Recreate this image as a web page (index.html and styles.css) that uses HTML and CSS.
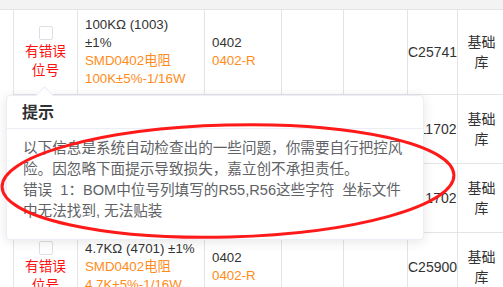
FILE: index.html
```html
<!DOCTYPE html>
<html lang="zh-CN">
<head>
<meta charset="utf-8">
<title>BOM 检查</title>
<link rel="stylesheet" href="styles.css">
</head>
<body>
<div class="page">
  <div class="strip"></div>

  <table class="bom">
    <colgroup>
      <col class="c-chk"><col class="c-desc"><col class="c-pkg"><col class="c-x"><col class="c-y"><col class="c-part"><col class="c-lib">
    </colgroup>
    <tbody>
      <tr>
        <td class="chk"><span class="box"></span><div class="err">有错误位号</div></td>
        <td><div>100KΩ (1003) ±1%</div><div class="org">SMD0402电阻</div><div class="org">100K±5%-1/16W</div></td>
        <td><div>0402</div><div class="org">0402-R</div></td>
        <td></td><td></td>
        <td class="mid">C25741</td>
        <td class="mid lib">基础库</td>
      </tr>
      <!-- rows 2/3 sit under the popover -->
      <tr class="r-mid">
        <td class="chk"><span class="box"></span></td>
        <td></td><td></td><td></td><td></td>
        <td class="mid">C11702</td>
        <td class="mid lib">基础库</td>
      </tr>
      <tr class="r-mid">
        <td class="chk"><span class="box"></span></td>
        <td></td><td></td><td></td><td></td>
        <td class="mid">C11702</td>
        <td class="mid lib">基础库</td>
      </tr>
      <tr>
        <td class="chk"><span class="box"></span><div class="err">有错误位号</div></td>
        <td><div>4.7KΩ (4701) ±1%</div><div class="org">SMD0402电阻</div><div class="org">4.7K±5%-1/16W</div></td>
        <td><div>0402</div><div class="org">0402-R</div></td>
        <td></td><td></td>
        <td class="mid">C25900</td>
        <td class="mid lib">基础库</td>
      </tr>
    </tbody>
  </table>

  <!-- popover anchored to row 1 -->
  <div class="pop" role="tooltip">
    <div class="pop-title">提示</div>
    <div class="pop-body">以下信息是系统自动检查出的一些问题，你需要自行把控风险。因忽略下面提示导致损失，嘉立创不承担责任。<br>错误&nbsp;&nbsp;1：BOM中位号列填写的R55,R56这些字符&nbsp;&nbsp;坐标文件中无法找到, 无法贴装</div>
  </div>

  <!-- hand-drawn red circle -->
  <svg class="mark" width="503" height="287" viewBox="0 0 503 287">
    <ellipse cx="228" cy="181" rx="226" ry="56" transform="rotate(-1.5 228 181)"/>
  </svg>
</div>
</body>
</html>
```

FILE: styles.css
```css
:root{
  --line:#e4e4e4;--text:#333;--orange:#ff8c1a;--red:#ff1111;
  --pop-line:#ebeef5;--pop-text:#606266;--pop-title:#303133
}
*{box-sizing:border-box;margin:0;padding:0}
html,body{width:503px;height:287px;overflow:hidden;background:#fff}
body{font-family:"Liberation Sans","Noto Sans CJK SC",sans-serif;font-size:13.3px;color:var(--text)}
.page{position:relative;width:503px;height:287px}

.strip{height:10px;background:#f3f3f3;border-bottom:1px solid var(--line)}

.bom{margin-left:13px;margin-top:-1px;border-collapse:collapse;table-layout:fixed;width:494px}
.c-chk{width:64px}.c-desc{width:127px}.c-pkg{width:77px}.c-x{width:62px}.c-y{width:64px}.c-part{width:50px}.c-lib{width:50px}
.bom td{border:1px solid var(--line);padding:6px 7px;vertical-align:middle;line-height:18px}
.bom td.mid{text-align:center;padding:6px 0;line-height:20px;font-size:14px}
.bom td.lib{padding:6px 8px 6px 6px}
.bom td.chk{text-align:center;padding:8px 4px 6px}
.r-mid{height:69px}

.box{display:block;width:14px;height:14px;margin:0 auto 2px;border:1px solid #dcdfe6;border-radius:2px;background:#fff}
.err{color:var(--red);font-size:13.7px;line-height:19px;padding:0 5px}
.org{color:var(--orange)}

.pop{position:absolute;left:6px;top:95px;width:418px;height:145px;background:#fff;border:1px solid var(--pop-line);border-radius:4px;box-shadow:0 2px 12px rgba(0,0,0,.1)}
.pop::before{content:"";position:absolute;left:31px;top:-7px;width:12px;height:12px;background:#fff;border-left:1px solid var(--pop-line);border-top:1px solid var(--pop-line);transform:rotate(45deg)}
.pop-title{height:33px;padding:0 15px;font-size:16px;font-weight:700;line-height:33px;color:var(--pop-title);border-bottom:1px solid var(--pop-line)}
.pop-body{padding:9px 14px 0 16px;font-size:14.6px;line-height:21px;color:var(--pop-text)}

.mark{position:absolute;left:0;top:0;pointer-events:none}
.mark ellipse{fill:none;stroke:#ff1a1a;stroke-width:3}
```
